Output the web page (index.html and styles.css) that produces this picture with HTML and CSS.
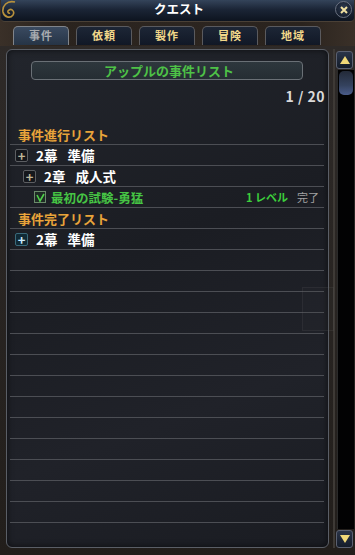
FILE: index.html
```html
<!DOCTYPE html>
<html lang="ja">
<head>
<meta charset="utf-8">
<link rel="stylesheet" href="styles.css">
</head>
<body>
<div class="window">
  <div class="titlebar">
    <svg class="swirl" width="18" height="20" viewBox="0 0 18 20"><path d="M14 2 C6 0 1 6 2 12 C3 17 9 19 12 15 C14 12 11 8 8 10 C6 11 7 14 9 13" fill="none" stroke="#b8913c" stroke-width="1.6"/></svg>
    <span class="title">クエスト</span>
    <span class="close">
      <svg width="8" height="8" viewBox="0 0 8 8"><path d="M1 1 L7 7 M7 1 L1 7" stroke="#f0e0a0" stroke-width="2"/></svg>
    </span>
  </div>
  <div class="tabs">
    <div class="tab active">事件</div>
    <div class="tab">依頼</div>
    <div class="tab">製作</div>
    <div class="tab">冒険</div>
    <div class="tab">地域</div>
  </div>
  <div class="main">
    <div class="panel">
      <div class="header">アップルの事件リスト</div>
      <div class="count">1 / 20</div>
      <div class="list">
        <div class="row section">事件進行リスト</div>
        <div class="row item lvl1"><span class="plus">+</span><span class="name">2幕 準備</span></div>
        <div class="row item lvl2"><span class="plus">+</span><span class="name">2章 成人式</span></div>
        <div class="row quest">
          <span class="check"><svg width="9" height="9" viewBox="0 0 9 9"><path d="M1 2 L4 8 L8 1" fill="none" stroke="#4fd04a" stroke-width="1.6"/></svg></span>
          <span class="qname">最初の試験-勇猛</span>
          <span class="level">1 レベル</span>
          <span class="done">完了</span>
        </div>
        <div class="row section">事件完了リスト</div>
        <div class="row item lvl1"><span class="plus cyan">+</span><span class="name">2幕 準備</span></div>
        <div class="row"></div><div class="row"></div><div class="row"></div>
        <div class="row"></div><div class="row"></div><div class="row"></div>
        <div class="row"></div><div class="row"></div><div class="row"></div>
        <div class="row"></div><div class="row"></div><div class="row"></div>
        <div class="row"></div>
      </div>
      <div class="ghost"></div>
    </div>
    <div class="scrollbar">
      <div class="sbtn"><svg width="10" height="8" viewBox="0 0 10 8"><path d="M5 0 L10 8 L0 8 Z" fill="#f0d878"/></svg></div>
      <div class="track"><div class="thumb"></div></div>
      <div class="sbtn"><svg width="10" height="8" viewBox="0 0 10 8"><path d="M0 0 L10 0 L5 8 Z" fill="#f0d878"/></svg></div>
    </div>
  </div>
</div>
</body>
</html>
```
FILE: styles.css
```css
html, body {
  margin: 0;
  padding: 0;
  width: 355px;
  height: 555px;
  overflow: hidden;
  background: #1e1915;
  font-family: "Noto Sans CJK JP", "Noto Sans", sans-serif;
}
.window {
  width: 355px;
  height: 555px;
  display: flex;
  flex-direction: column;
  background: linear-gradient(90deg, #3a3028 0%, #2a231e 15%, #2c2520 50%, #2a231e 85%, #3a3028 100%);
}
.titlebar {
  height: 21px;
  display: flex;
  align-items: flex-start;
  justify-content: center;
  position: relative;
  background: linear-gradient(180deg, #34445a 0%, #1b2536 45%, #0d141f 100%);
  border-bottom: 1px solid #4a4036;
  border-radius: 0 0 4px 4px;
  margin: 0 1px;
}
.swirl {
  position: absolute;
  left: 0;
  top: 0;
}
.title {
  color: #ffffff;
  font-size: 12.5px;
  font-weight: bold;
  line-height: 14px;
  padding-top: 2px;
  margin-left: 3px;
}
.close {
  position: absolute;
  right: 2px;
  top: 1px;
  width: 15px;
  height: 15px;
  border-radius: 50%;
  background: radial-gradient(circle at 50% 40%, #2d3a50, #0e1522);
  border: 1px solid #6a7282;
  display: flex;
  align-items: center;
  justify-content: center;
}
.tabs {
  display: flex;
  gap: 7px;
  padding: 4px 0 0 13px;
  height: 20px;
}
.tab {
  width: 56px;
  height: 19px;
  border: 1px solid #5a5a5e;
  border-bottom: none;
  border-radius: 5px 5px 0 0;
  background: linear-gradient(180deg, #1d2636 0%, #111826 100%);
  color: #f2d88a;
  font-size: 11px;
  font-weight: bold;
  display: flex;
  align-items: center;
  justify-content: center;
  letter-spacing: 1px;
  padding-bottom: 2px;
  box-sizing: border-box;
}
.tab.active {
  background: linear-gradient(180deg, #3a4a60 0%, #263446 100%);
  color: #a8acb0;
  border-color: #80848a;
}
.main {
  flex: 1;
  display: flex;
  padding: 3px 0 7px 6px;
  gap: 4px;
  background: linear-gradient(180deg, #2e2a28, #221e1b);
}
.panel {
  position: relative;
  width: 322px;
  border: 1px solid #5a5e66;
  border-radius: 6px;
  background: linear-gradient(160deg, #22252c 0%, #1b1d23 40%, #202229 70%, #1a1c22 100%);
  box-shadow: inset 0 0 6px rgba(0,0,0,0.6);
  display: flex;
  flex-direction: column;
  align-items: stretch;
}
.header {
  margin: 11px 25px 0 24px;
  height: 17px;
  border: 1px solid #6a7076;
  border-radius: 4px;
  background: linear-gradient(180deg, #2e373d, #252d33);
  color: #4ec247;
  font-size: 13px;
  font-weight: bold;
  line-height: 17px;
  text-align: center;
  text-indent: 4px;
}
.count {
  margin: 7px 3px 0 0;
  height: 18px;
  line-height: 18px;
  text-align: right;
  color: #dadada;
  font-size: 14px;
  font-weight: bold;
  letter-spacing: 0.5px;
}
.list {
  margin: 19px 4px 0 3px;
  display: flex;
  flex-direction: column;
}
.row {
  height: 20px;
  border-bottom: 1px solid #4c4e54;
  display: flex;
  align-items: center;
  font-size: 13px;
  font-weight: bold;
  color: #ffffff;
}
.section {
  color: #e9a43a;
  padding-left: 8px;
}
.name {
  word-spacing: 7px;
  font-size: 13.5px;
}
.item.lvl1 { padding-left: 5px; }
.item.lvl2 { padding-left: 13px; }
.plus {
  width: 11px;
  height: 11px;
  border: 1px solid #5c5e62;
  border-radius: 2px;
  background: #15171c;
  color: #c0b89a;
  font-size: 13px;
  line-height: 11px;
  text-align: center;
  margin-right: 8px;
  font-weight: bold;
}
.plus.cyan {
  color: #cfeeff;
  background: #102a36;
  border-color: #3a6a7a;
}
.quest {
  padding-left: 24px;
}
.check {
  width: 10px;
  height: 10px;
  border: 1px solid #6a8a6a;
  background: #1e2a24;
  display: flex;
  align-items: center;
  justify-content: center;
  margin-right: 5px;
}
.qname {
  color: #46c444;
  font-size: 12.5px;
  flex: 1;
}
.level {
  color: #3ccf3c;
  font-size: 11px;
  margin-right: 9px;
}
.done {
  color: #a2a2a2;
  font-size: 11px;
  font-weight: normal;
  margin-right: 5px;
}
.ghost {
  position: absolute;
  right: -6px;
  top: 237px;
  width: 30px;
  height: 42px;
  border: 1px solid rgba(120,120,120,0.12);
  background: rgba(60,60,60,0.1);
}
.scrollbar {
  width: 19px;
  display: flex;
  flex-direction: column;
  border-left: 2px solid #3e3a36;
  padding: 2px 0 0 1px;
}
.sbtn {
  width: 15px;
  height: 16px;
  border: 1px solid #5a6070;
  border-radius: 3px;
  background: linear-gradient(180deg, #2a3448, #141c2a);
  display: flex;
  align-items: center;
  justify-content: center;
}
.track {
  flex: 1;
  margin: 1px 1px;
  background: #020203;
  border-left: 1px solid #2a2a2a;
}
.thumb {
  margin: 1px 1px 0 1px;
  height: 24px;
  border-radius: 5px;
  background: linear-gradient(180deg, #232a38 0%, #34425e 60%, #4a5c8a 100%);
}
```
